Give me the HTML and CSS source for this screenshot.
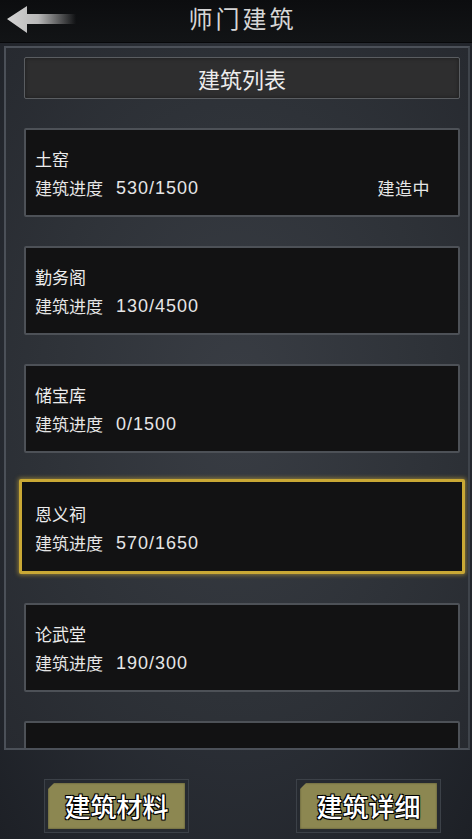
FILE: index.html
```html
<!DOCTYPE html>
<html lang="zh-CN">
<head>
<meta charset="utf-8">
<title>师门建筑</title>
<link rel="stylesheet" href="styles.css">
</head>
<body>
<div class="screen">
  <header class="topbar">
    <div class="back">
      <svg width="78" height="36" viewBox="0 0 78 36">
        <defs>
          <linearGradient id="fade" x1="0" x2="1" y1="0" y2="0">
            <stop offset="0" stop-color="#d4d4d4"/>
            <stop offset="0.45" stop-color="#b8b8b8"/>
            <stop offset="1" stop-color="#b8b8b8" stop-opacity="0"/>
          </linearGradient>
        </defs>
        <path d="M7 17 L27 4 L27 12 L76 12 L76 22 L27 22 L27 31 Z" fill="url(#fade)"/>
      </svg>
    </div>
    <h1 class="title">师门建筑</h1>
    <div></div>
  </header>

  <main class="panel">
    <div class="list-head">建筑列表</div>
    <div class="list">
      <div class="card">
        <div class="name">土窑</div>
        <div class="row"><span>建筑进度</span><span class="num">530/1500</span><span class="status">建造中</span></div>
      </div>
      <div class="card">
        <div class="name">勤务阁</div>
        <div class="row"><span>建筑进度</span><span class="num">130/4500</span></div>
      </div>
      <div class="card">
        <div class="name">储宝库</div>
        <div class="row"><span>建筑进度</span><span class="num">0/1500</span></div>
      </div>
      <div class="card selected">
        <div class="name">恩义祠</div>
        <div class="row"><span>建筑进度</span><span class="num">570/1650</span></div>
      </div>
      <div class="card">
        <div class="name">论武堂</div>
        <div class="row"><span>建筑进度</span><span class="num">190/300</span></div>
      </div>
      <div class="card">
        <div class="name"></div>
        <div class="row"></div>
      </div>
    </div>
  </main>

  <footer class="actions">
    <button class="btn">建筑材料</button>
    <button class="btn">建筑详细</button>
  </footer>
</div>
</body>
</html>
```

FILE: styles.css
```css
* { box-sizing: border-box; }
html, body {
  margin: 0;
  padding: 0;
  width: 472px;
  height: 839px;
  overflow: hidden;
  background: #23272d;
  font-family: "Noto Sans CJK SC", "Noto Sans", sans-serif;
  color: #e4e4e4;
}
.screen {
  width: 472px;
  height: 839px;
  display: flex;
  flex-direction: column;
  background: radial-gradient(ellipse at 50% 45%, #353a42 0%, #2a2e35 55%, #1d2026 100%);
}
.topbar {
  height: 43px;
  flex: none;
  display: grid;
  grid-template-columns: 1fr auto 1fr;
  align-items: center;
  background: linear-gradient(#0c0d0f, #121416);
  border-bottom: 1px solid #07080a;
}
.back { display: flex; align-items: center; height: 43px; }
.back svg { display: block; margin-top: -4px; }
.title {
  margin: 0;
  font-size: 24px;
  font-weight: 400;
  letter-spacing: 3px;
  padding-left: 13px;
  color: #d6d6d6;
  line-height: 1;
  margin-top: -8px;
}
.panel {
  flex: none;
  height: 704px;
  margin: 3px 2px 0 4px;
  border: 2px solid #4b5058;
  border-right-color: #3f444b;
  background: radial-gradient(ellipse at 50% 50%, #393d44 0%, #2e3238 60%, #272a30 100%);
  padding: 9px 8px 0 18px;
  overflow: hidden;
}
.list-head {
  height: 42px;
  border: 1px solid #5a5d61;
  border-radius: 2px;
  background: #2e2e2f;
  display: flex;
  align-items: center;
  justify-content: center;
  font-size: 22px;
  color: #ececec;
  letter-spacing: 0;
  box-shadow: inset 0 0 4px rgba(0,0,0,.4);
}
.list {
  display: flex;
  flex-direction: column;
  gap: 29px;
  padding-top: 29px;
}
.card {
  flex: none;
  height: 89px;
  background: #121213;
  border: 2px solid #4d5157;
  border-radius: 2px;
  padding: 18px 12px 0 9px;
  display: flex;
  flex-direction: column;
  gap: 6px;
  font-size: 17px;
}
.card.selected {
  margin: -3px -5px 0 -5px;
  height: 95px;
  border: 3px solid #c9a835;
  box-shadow: 0 0 4px 1px rgba(214, 178, 60, .55);
  padding: 21px 12px 0 13px;
}
.name { height: 22px; line-height: 22px; color: #ececec; }
.row {
  display: flex;
  align-items: center;
  height: 24px;
  line-height: 24px;
  color: #e6e6e6;
}
.num {
  margin-left: 13px;
  font-family: "Liberation Sans", "Noto Sans", sans-serif;
  font-size: 18px;
  letter-spacing: 1px;
}
.status { margin-left: auto; margin-right: 16px; letter-spacing: 0.5px; }
.actions {
  flex: 1;
  display: flex;
  justify-content: space-between;
  align-items: flex-start;
  padding: 30px 32px 0 45px;
}
.btn {
  position: relative;
  width: 143px;
  height: 52px;
  padding: 0 0 2px 0;
  border: 3px solid #262a30;
  outline: 1px solid #3c4148;
  background: #8c8751;
  font-family: "Noto Sans CJK SC", sans-serif;
  font-size: 26px;
  font-weight: 500;
  color: #ffffff;
  letter-spacing: 0;
  text-shadow: -1px -1px 0 #000, 1px -1px 0 #000, -1px 1px 0 #000, 1px 1px 0 #000, 0 0 2px #000;
  box-shadow: inset 0 0 2px rgba(0,0,0,.5);
}
.btn::before {
  content: "";
  position: absolute;
  left: -1px;
  top: -1px;
  border-top: 8px solid #262a30;
  border-right: 8px solid transparent;
}
```
